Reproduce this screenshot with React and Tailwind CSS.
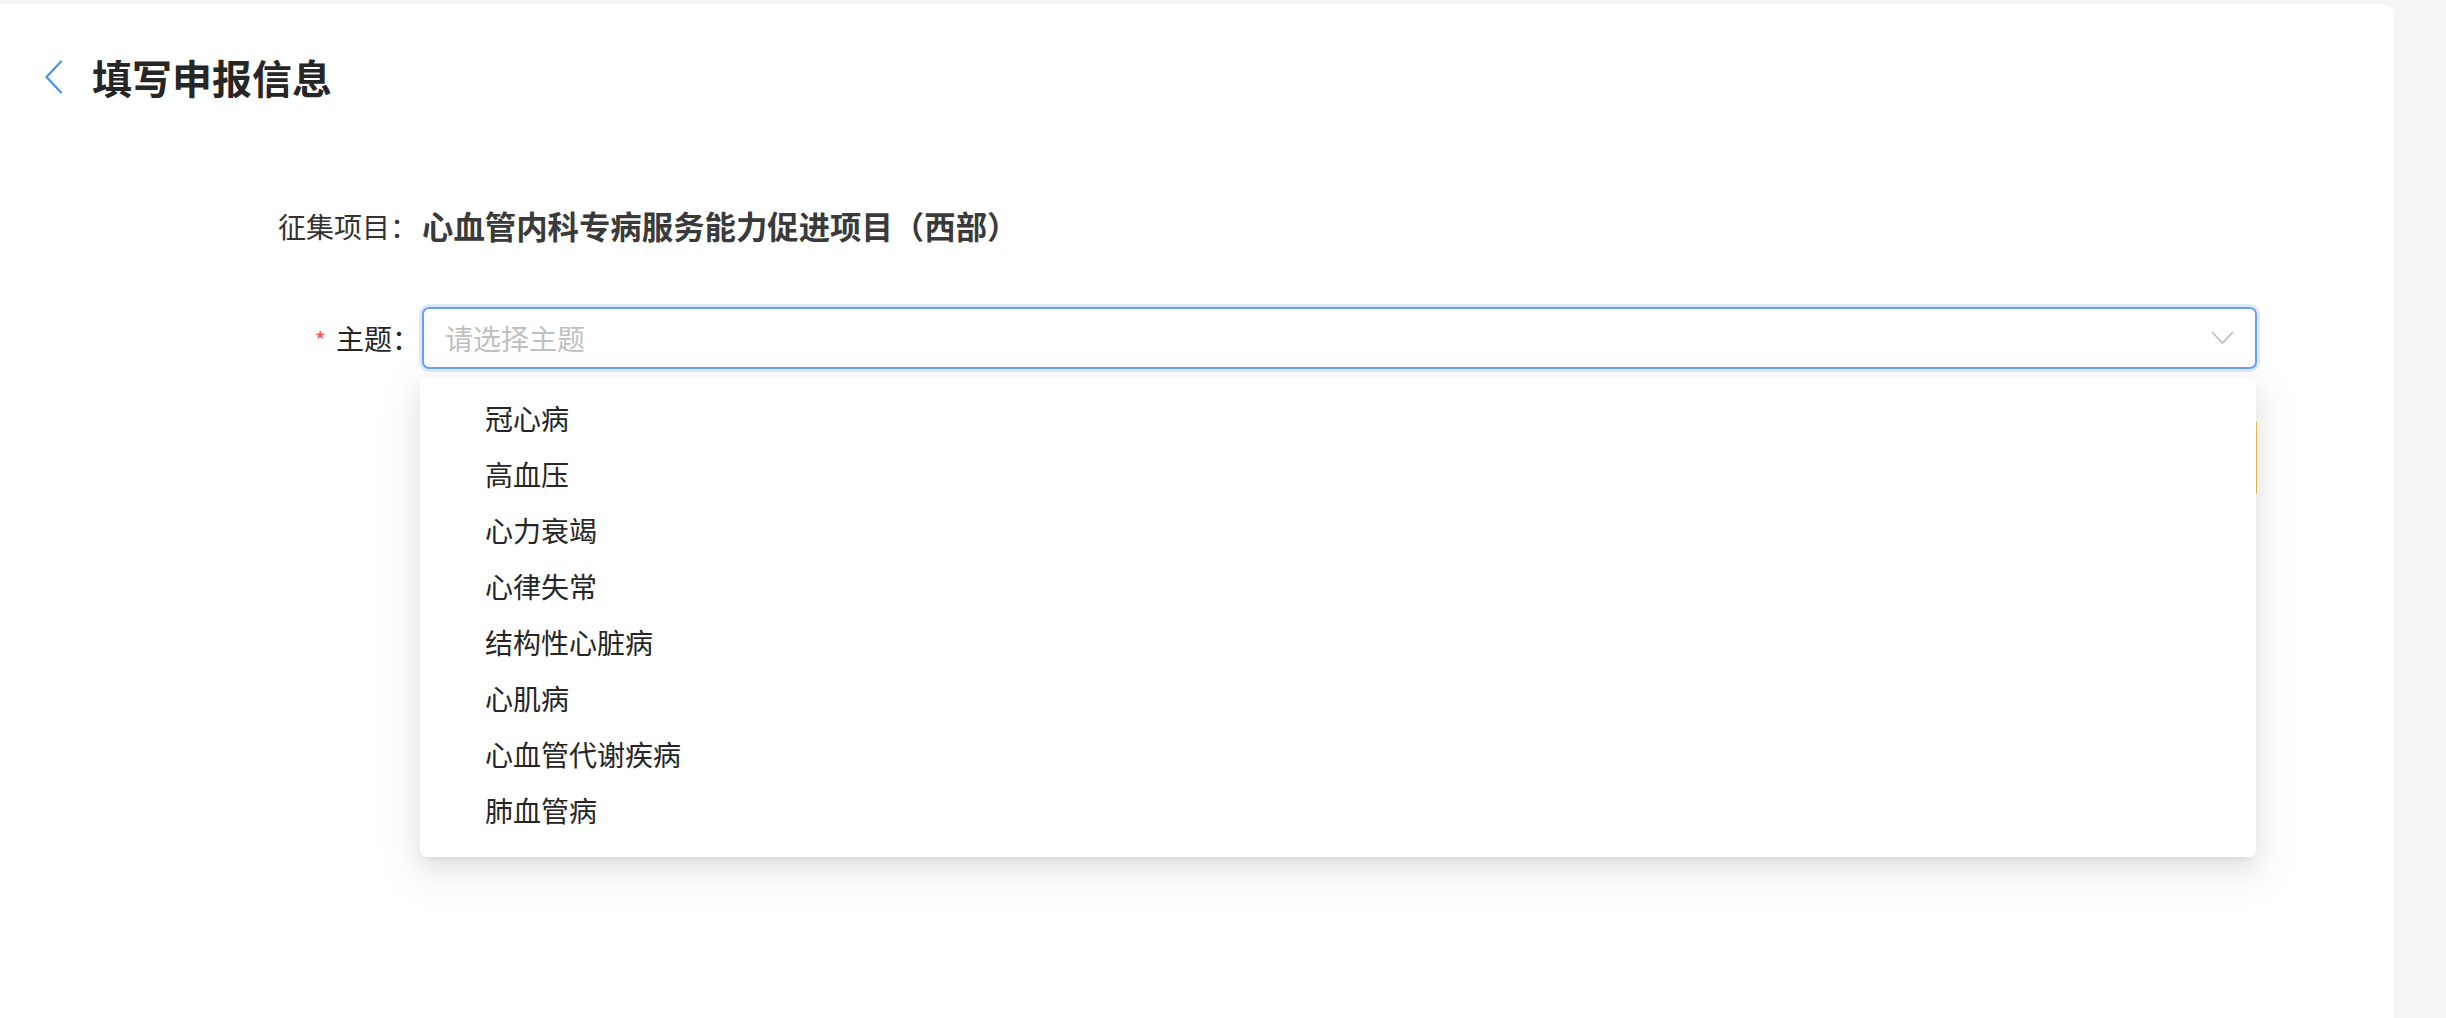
import React from "react";

const items = [
  "冠心病",
  "高血压",
  "心力衰竭",
  "心律失常",
  "结构性心脏病",
  "心肌病",
  "心血管代谢疾病",
  "肺血管病",
];

export default function App() {
  return (
    <div
      className="flex min-h-[1018px] w-full bg-[#f5f5f5] pt-[4px]"
      style={{ fontFamily: '"Noto Sans CJK SC", "Noto Sans", sans-serif' }}
    >
      <div className="flex w-[2394px] shrink-0 flex-col rounded-tr-[10px] bg-white pt-[45px]">
        {/* Header */}
        <div className="flex h-[56px] items-center">
          <div className="ml-[44px] flex w-[48px] items-center">
            <svg width="20" height="34" viewBox="0 0 20 34" fill="none">
              <path d="M17 1.5 L2.5 17 L17 32.5" stroke="#4b8ef5" strokeWidth="2.2" strokeLinecap="round" strokeLinejoin="round" />
            </svg>
          </div>
          <h1 className="text-[40px] leading-[56px] font-bold text-[#262626]">填写申报信息</h1>
        </div>

        {/* Form */}
        <div className="mt-[99px] flex flex-col pr-[137px]">
          {/* Row 1 */}
          <div className="flex h-[44px] items-center">
            <div className="w-[422px] shrink-0 pl-[278px] text-[28px] leading-[44px] text-[#333333]">征集项目：</div>
            <div className="text-[31.4px] leading-[44px] font-semibold text-[#3a3a3a]">
              心血管内科专病服务能力促进项目（西部）
            </div>
          </div>

          {/* Row 2 */}
          <div className="mt-[59px] flex">
            <div className="flex h-[62px] w-[422px] shrink-0 items-center justify-end pr-[2px]">
              <span className="mr-[10px] mt-[4px] text-[24px] leading-none text-[#ff4d4f]">*</span>
              <span className="text-[28px] leading-[44px] text-[#262626]">主题：</span>
            </div>
            <div className="relative flex-1">
              <div className="flex h-[62px] items-center justify-between rounded-[7px] border-2 border-[#6d9ef6] bg-white pl-[21px] pr-[21px] shadow-[0_0_0_3px_rgba(109,158,246,0.22)]">
                <span className="text-[28px] leading-[44px] text-[#bfbfbf]">请选择主题</span>
                <svg width="23" height="14" viewBox="0 0 23 14" fill="none">
                  <path d="M1.5 1.5 L11.5 12 L21.5 1.5" stroke="#bdbdbd" strokeWidth="1.8" strokeLinecap="round" strokeLinejoin="round" />
                </svg>
              </div>

              {/* box behind dropdown */}
              <div className="mt-[51px] h-[76px] rounded-[4px] border-2 border-[#ecc95e] bg-[#fffbe6]" />

              {/* Dropdown */}
              <div className="absolute left-[-2px] right-[1px] top-[71px] z-10 rounded-[7px] bg-white pt-[12px] pb-[19px] shadow-[0_5px_9px_-6px_rgba(0,0,0,0.12),0_9px_25px_0_rgba(0,0,0,0.08),0_14px_44px_12px_rgba(0,0,0,0.05)]">
                {items.map((it) => (
                  <div key={it} className="flex h-[56px] items-center pl-[65px] text-[28px] leading-[44px] text-[#262626]">
                    {it}
                  </div>
                ))}
              </div>
            </div>
          </div>
        </div>
      </div>
    </div>
  );
}
